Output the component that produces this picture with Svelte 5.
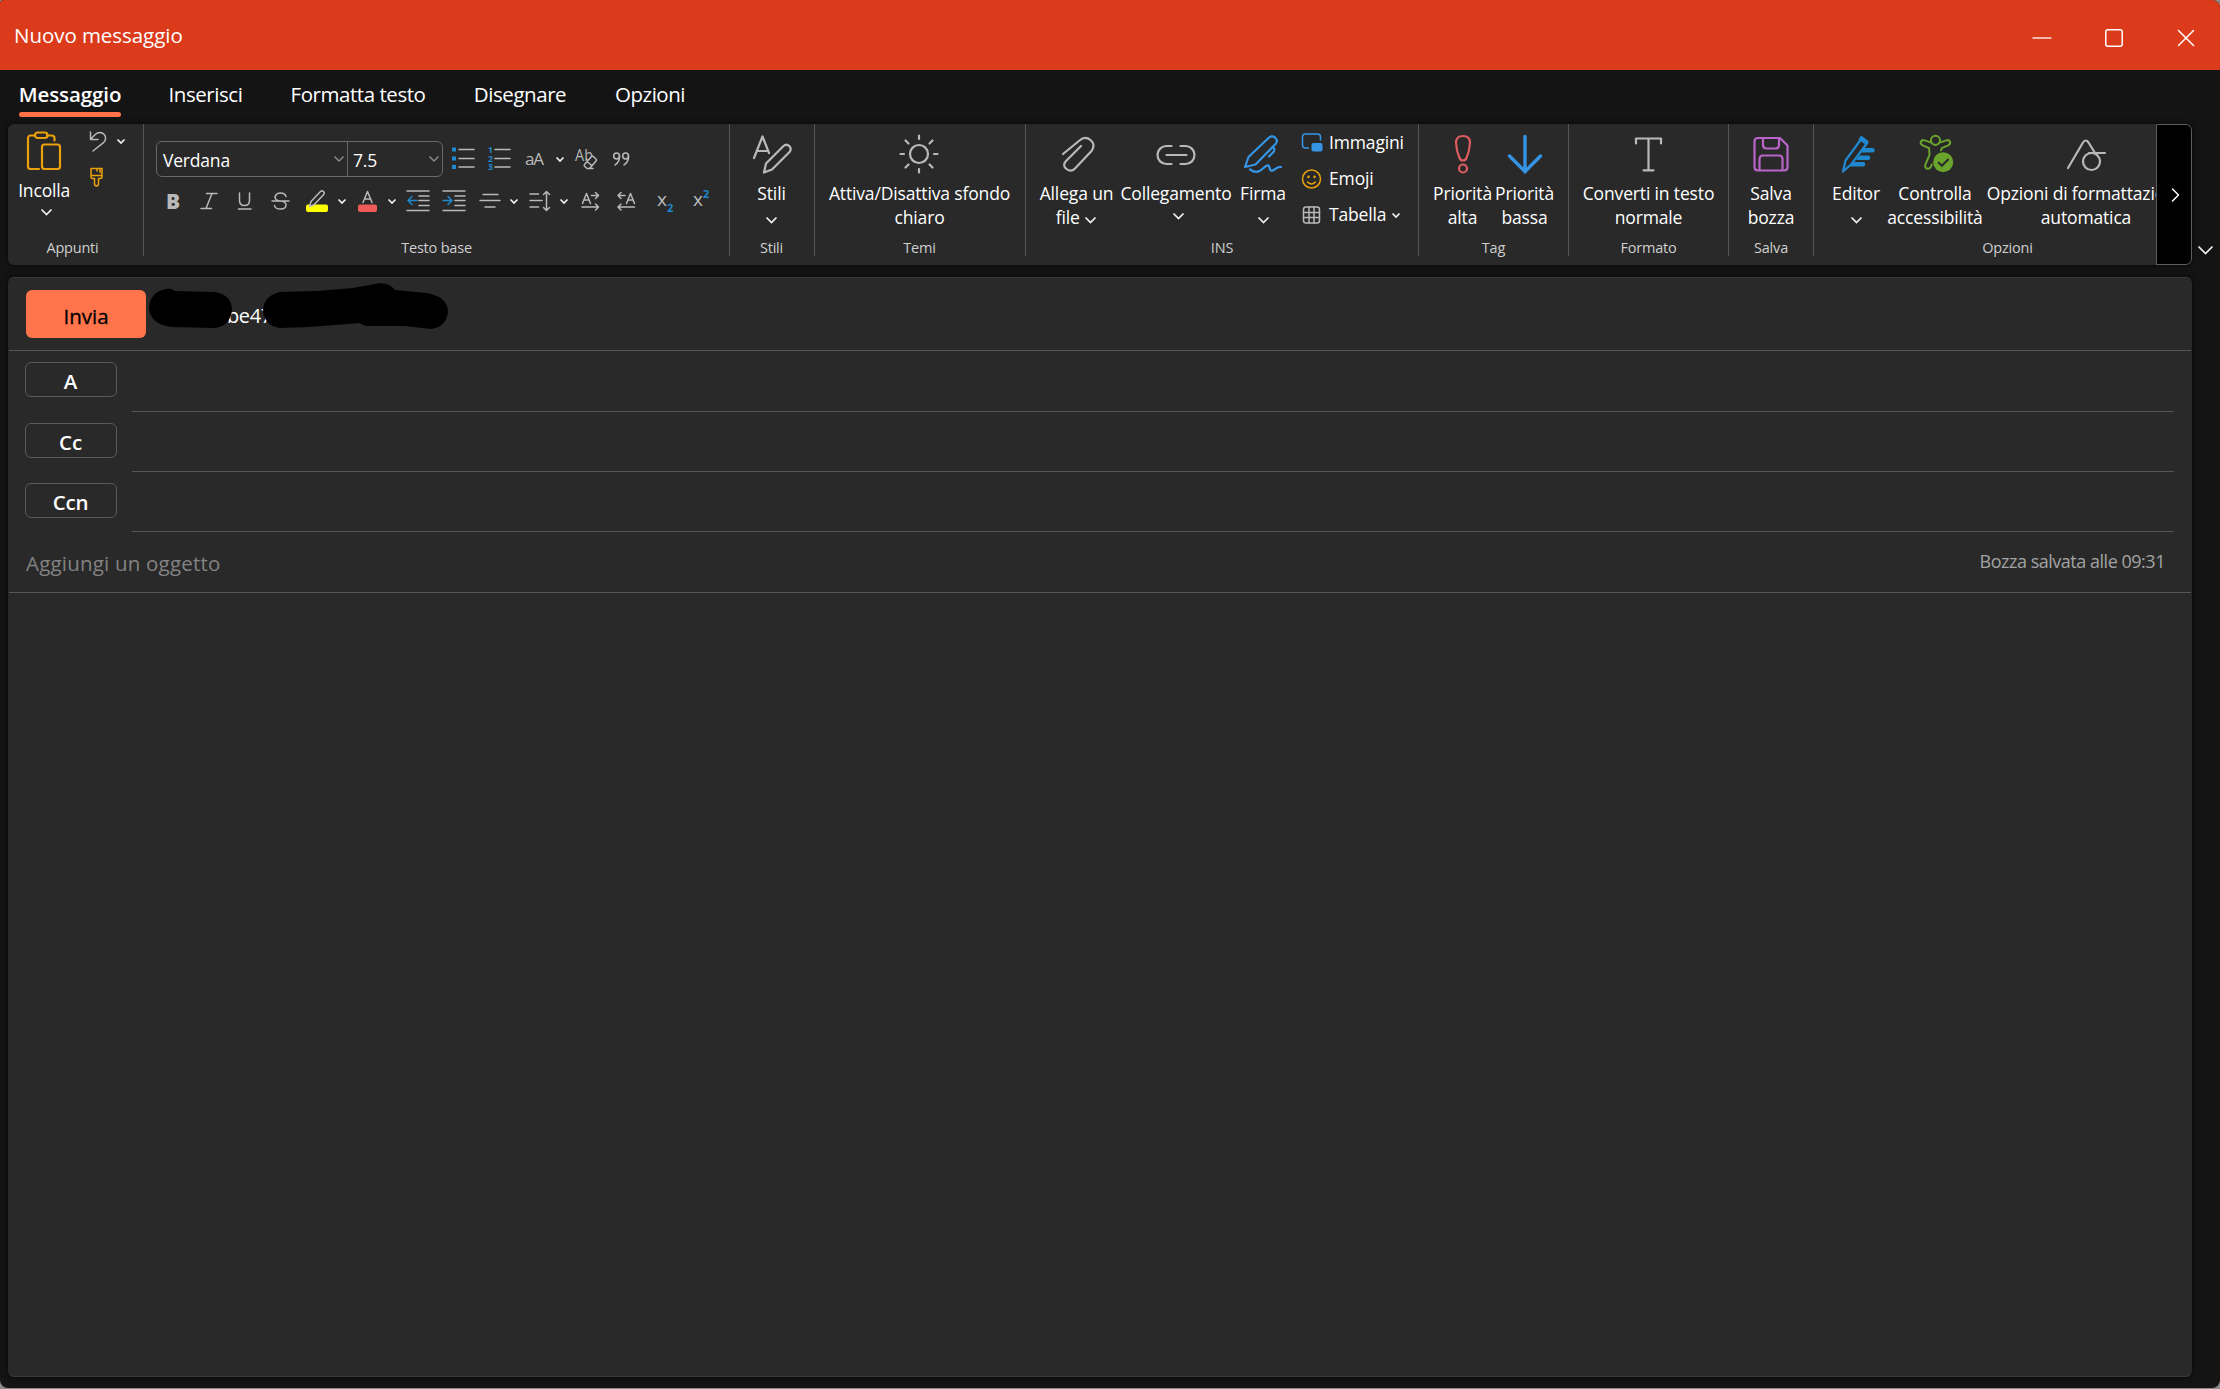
<script>
    let activeTab = 'Messaggio';
    let subject = '';

    const tabs = [
        { name: 'Messaggio', width: 102 },
        { name: 'Inserisci', width: 74 },
        { name: 'Formatta testo', width: 136 },
        { name: 'Disegnare', width: 93 },
        { name: 'Opzioni', width: 72 },
    ];

    const recipients = ['A', 'Cc', 'Ccn'];
</script>

{#snippet chevron(w = 9)}
    <svg class="chevron" width={w + 2} height={w / 2 + 3} viewBox="0 0 {w + 2} {w / 2 + 3}">
        <path d="M1.5 1.5 L{w / 2 + 1} {w / 2 + 1} L{w + 0.5} 1.5" />
    </svg>
{/snippet}

<div class="window">
    <header class="titlebar">
        <span class="title">Nuovo messaggio</span>
        <div class="controls">
            <svg width="18" height="18" viewBox="0 0 18 18"><path d="M0 9H18" opacity=".85" /></svg>
            <svg width="18" height="18" viewBox="0 0 18 18"><rect x=".8" y=".8" width="16.4" height="16.4" rx="2" /></svg>
            <svg width="18" height="18" viewBox="0 0 18 18"><path d="M1.5 1.5L16.5 16.5M16.5 1.5L1.5 16.5" /></svg>
        </div>
    </header>

    <nav class="tabs">
        {#each tabs as tab}
            <button
                class="tab"
                class:active={tab.name === activeTab}
                style="width: {tab.width}px"
                on:click={() => (activeTab = tab.name)}>{tab.name}</button
            >
        {/each}
    </nav>

    <div class="ribbon-row">
        <div class="ribbon">
            <!-- Appunti -->
            <section class="group g-clipboard">
                <div class="tools">
                    <div class="paste">
                        <svg class="orange thick" width="36" height="40" viewBox="0 0 36 40">
                            <path d="M13 38H4.5a2.5 2.5 0 0 1-2.5-2.5V7a2.5 2.5 0 0 1 2.5-2.5H8.5M21 4.5H26a2.5 2.5 0 0 1 2.5 2.5V9.5" />
                            <rect x="9" y="1.5" width="12.5" height="5.5" rx="2.7" />
                            <rect x="16" y="13.5" width="18" height="24.5" rx="2.5" />
                        </svg>
                        <span class="label">Incolla</span>
                        {@render chevron(11)}
                    </div>
                    <div class="clip-side">
                        <div class="undo">
                            <svg width="18" height="21" viewBox="0 0 18 21">
                                <path d="M1.5 1V8.5H9M1.8 8L6.5 3.2C9 .8 13 .8 15 3.2C17.3 5.8 17 9.3 14.8 11.3L4 20" />
                            </svg>
                            {@render chevron(8)}
                        </div>
                        <svg class="orange" width="15" height="21" viewBox="0 0 15 21">
                            <path d="M2 1.5H13V10Q13 11.5 11.5 11.5H9.5V16.5Q9.5 19 7.5 19T5.5 16.5V11.5H3.5Q2 11.5 2 10ZM2 8.5H13M8 1.5V4M11 1.5V5.5" />
                        </svg>
                    </div>
                </div>
                <span class="group-name">Appunti</span>
            </section>

            <!-- Testo base -->
            <section class="group g-text">
                <div class="tools text-tools">
                    <div class="text-row">
                        <div class="fontbox">
                            <div class="font-name">Verdana {@render chevron(10)}</div>
                            <div class="font-size">7.5 {@render chevron(10)}</div>
                        </div>
                        <div class="row-one">
                            <svg width="24" height="26" viewBox="0 0 24 26">
                                <path d="M7 3.5H22M7 12.5H22M7 21H22" />
                                <path class="blue-fill" d="M0 1.500h4v4h-4zM0 10.5h4v4h-4zM0 19h4v4h-4z" />
                            </svg>
                            <svg width="24" height="26" viewBox="0 0 24 26">
                                <path d="M7 3.5H22M7 12.5H22M7 21H22" />
                                <text class="num" x="0" y="7">1</text>
                                <text class="num" x="0" y="15.5">2</text>
                                <text class="num" x="0" y="24">3</text>
                            </svg>
                            <svg width="24" height="26" viewBox="0 0 24 26">
                                <text x="0" y="19" font-size="17" textLength="19">aA</text>
                            </svg>
                            {@render chevron(8)}
                            <svg width="24" height="26" viewBox="0 0 24 26">
                                <text x="0" y="14.5" font-size="15.5" textLength="18" lengthAdjust="spacingAndGlyphs">Ab</text>
                                <path class="cover" d="M9.5 18.5L16.5 10.5Q17.3 9.700 18.3 10.5L21 13Q22 14 21 15L14.5 22.5H12L9.5 20.2Q8.8 19.4 9.5 18.5ZM12 15.5L17 19.8M12 22.5H18" />
                            </svg>
                            <svg width="20" height="26" viewBox="0 0 20 26">
                                <circle cx="3.6" cy="10" r="2.9" />
                                <circle cx="12.6" cy="10" r="2.9" />
                                <path d="M6.5 10Q7 15.5 2 19M15.5 10Q16 15.5 11 19" />
                            </svg>
                        </div>
                    </div>
                    <div class="row-two">
                        <svg width="18" height="26" viewBox="0 0 18 26"><text x="0" y="21" font-size="21" font-weight="800">B</text></svg>
                        <svg width="18" height="26" viewBox="0 0 18 26"><path d="M5.5 5.5H16M0 20.5H10.5M11 5.5L5 20.5" /></svg>
                        <svg width="18" height="26" viewBox="0 0 18 26"><path d="M2.5 5V12.5Q2.5 17.5 7.5 17.5T12.5 12.5V5M1.5 21H14" /></svg>
                        <svg width="20" height="26" viewBox="0 0 20 26"><path d="M15 8.5Q14 5 9.5 5T4 9Q4 12.5 9.5 13T15 17Q15 21 9.5 21T3.5 17.5M1 13H18" /></svg>
                        <svg width="23" height="26" viewBox="0 0 23 26">
                            <path class="yellow-fill" d="M2 16.5H20a2 2 0 0 1 2 2V22a2 2 0 0 1-2 2H2a2 2 0 0 1-2-2V18.5a2 2 0 0 1 2-2z" />
                            <path class="cover" d="M3.5 18.5L5 13.5L14.5 3.5Q16 2.2 17.5 3.5T17.5 6.8L8 16.8Z" />
                        </svg>
                        {@render chevron(8)}
                        <svg width="22" height="26" viewBox="0 0 22 26">
                            <path d="M6 14.5L10.5 3.5L15 14.5M7.5 11H13.5" />
                            <rect class="red-fill" x="1" y="16.5" width="19" height="7.5" rx="2" />
                        </svg>
                        {@render chevron(8)}
                        <svg width="23" height="26" viewBox="0 0 23 26">
                            <path d="M0 3H22M12 8H22M12 12.5H22M12 17.5H22M0 22.5H22" />
                            <path class="blue" d="M10 12.5H1M5 8.5L1 12.5L5 16.5" />
                        </svg>
                        <svg width="23" height="26" viewBox="0 0 23 26">
                            <path d="M0 3H22M12 8H22M12 12.5H22M12 17.5H22M0 22.5H22" />
                            <path class="blue" d="M0 12.5H9M5 8.5L9 12.5L5 16.5" />
                        </svg>
                        <svg width="22" height="26" viewBox="0 0 22 26"><path d="M3 6.5H18M0 12.5H20M5 19H15" /></svg>
                        {@render chevron(8)}
                        <svg width="22" height="26" viewBox="0 0 22 26"><path d="M0 6H8.5M0 12.5H12M0 19H8.5M16.5 3.5V22.5M13.5 6.5L16.5 3.5L19.5 6.5M13.5 19.5L16.5 22.5L19.5 19.5" /></svg>
                        {@render chevron(8)}
                        <svg width="19" height="26" viewBox="0 0 19 26"><path d="M.5 15.5L4.5 5.5L8.5 15.5M2 12H7M9.5 7.5H16.5M13.5 4.5L16.5 7.5L13.5 10.5M0 19H16.5M13.5 16L16.5 19L13.5 22" /></svg>
                        <svg width="19" height="26" viewBox="0 0 19 26"><path d="M9.5 15.5L13.5 5.5L17.5 15.5M11 12H16M8 7.5H1M4 4.5L1 7.5L4 10.5M17.5 19H1M4 16L1 19L4 22" /></svg>
                        <svg width="19" height="26" viewBox="0 0 19 26"><text x="0" y="18" font-size="19">x</text><text class="num script" x="10" y="24">2</text></svg>
                        <svg width="19" height="26" viewBox="0 0 19 26"><text x="0" y="18" font-size="19">x</text><text class="num script" x="10" y="10">2</text></svg>
                    </div>
                </div>
                <span class="group-name">Testo base</span>
            </section>

            <!-- Stili -->
            <section class="group g-styles">
                <div class="tools">
                    <div class="big">
                        <svg class="thick" width="40" height="40" viewBox="0 0 40 40">
                            <path d="M2 24L10.5 2.5L17 19M5 17H15.5" />
                            <path d="M12 38.5L14 29.5L31.5 12Q34.5 9.5 37.3 12Q40 15 37.5 18L20 35.5Z" />
                        </svg>
                        <span class="label">Stili</span>
                        {@render chevron(11)}
                    </div>
                </div>
                <span class="group-name">Stili</span>
            </section>

            <!-- Temi -->
            <section class="group g-theme">
                <div class="tools">
                    <div class="big">
                        <svg class="thick" width="40" height="40" viewBox="0 0 40 40">
                            <circle cx="20" cy="20" r="9" />
                            <path d="M20 1.5V5M20 35V38.5M1.5 20H5M35 20H38.5M6.5 6.5L9.5 9.5M30.5 30.5L33.5 33.5M33.5 6.5L30.5 9.5M9.5 30.5L6.5 33.5" />
                        </svg>
                        <span class="label">Attiva/Disattiva sfondo<br />chiaro</span>
                    </div>
                </div>
                <span class="group-name">Temi</span>
            </section>

            <!-- INS -->
            <section class="group g-insert">
                <div class="tools">
                    <div class="big attach">
                        <svg class="thick" width="40" height="40" viewBox="0 0 40 40">
                            <path d="M5 20L21.5 6.5Q27 1.500 32.5 6T33.5 17L17 34.5Q13 38.5 8.5 35T8 27L23 12" />
                        </svg>
                        <span class="label">Allega un<br />file {@render chevron(11)}</span>
                    </div>
                    <div class="big link">
                        <svg class="thick" width="40" height="40" viewBox="0 0 40 40">
                            <path d="M15.5 12H10.5A9 9 0 0 0 10.5 30H15.5M24.5 12H29.5A9 9 0 0 1 29.5 30H24.5M10.5 21H30.5" />
                        </svg>
                        <span class="label">Collegamento</span>
                        {@render chevron(11)}
                    </div>
                    <div class="big sign">
                        <svg class="sky thick" width="40" height="40" viewBox="0 0 40 40">
                            <path d="M2 33L5.5 23L25.5 4Q28.5 1 32 3.5Q35.5 7 32.5 10L12.5 30.5ZM30 13Q33 16 29.5 19L26 22.5M7 35.5Q14 40.5 20 34.5T26.5 34Q27.5 38.5 31.5 35.5T38 33" />
                        </svg>
                        <span class="label">Firma</span>
                        {@render chevron(11)}
                    </div>
                    <div class="side">
                        <div class="side-item">
                            <svg class="sky" width="23" height="22" viewBox="0 0 23 22">
                                <path d="M7.5 16H4.5Q1.5 16 1.5 13V5Q1.5 2 4.5 2H16.5Q19.5 2 19.5 5V8" />
                                <rect class="sky-fill" x="10.5" y="11" width="11" height="8.5" rx="2" />
                            </svg>
                            <span class="label">Immagini</span>
                        </div>
                        <div class="side-item">
                            <svg class="orange" width="23" height="22" viewBox="0 0 23 22">
                                <circle cx="10.5" cy="11" r="9" />
                                <path d="M6.5 14Q10.5 18 14.5 14" />
                                <path stroke-width="2.5" d="M7.5 8.7v.2M13.5 8.7v.2" />
                            </svg>
                            <span class="label">Emoji</span>
                        </div>
                        <div class="side-item">
                            <svg width="23" height="22" viewBox="0 0 23 22">
                                <rect x="2.5" y="3" width="16" height="16" rx="2.5" />
                                <path d="M8 3V19M13 3V19M2.5 8.5H18.5M2.5 13.5H18.5" />
                            </svg>
                            <span class="label">Tabella</span>
                            {@render chevron(8)}
                        </div>
                    </div>
                </div>
                <span class="group-name">INS</span>
            </section>

            <!-- Tag -->
            <section class="group g-tag">
                <div class="tools">
                    <div class="big tag">
                        <svg class="red thick" width="40" height="40" viewBox="0 0 40 40">
                            <path d="M13 9Q13 2 20 2T27 9Q26.5 17 23.5 24Q22.5 26.5 20 26.5T16.5 24Q13.5 17 13 9Z" />
                            <circle cx="20" cy="34.5" r="4" />
                        </svg>
                        <span class="label">Priorità<br />alta</span>
                    </div>
                    <div class="big tag">
                        <svg class="sky heavy" width="40" height="40" viewBox="0 0 40 40">
                            <path d="M20 2.5V38M4.5 22L20 37.5L35.5 22" />
                        </svg>
                        <span class="label">Priorità<br />bassa</span>
                    </div>
                </div>
                <span class="group-name">Tag</span>
            </section>

            <!-- Formato -->
            <section class="group g-format">
                <div class="tools">
                    <div class="big">
                        <svg class="thick" width="40" height="40" viewBox="0 0 40 40">
                            <path d="M7 9.5V4.5H32V9.5M19.5 4.5V36M14.5 36.3H24.5" />
                        </svg>
                        <span class="label">Converti in testo<br />normale</span>
                    </div>
                </div>
                <span class="group-name">Formato</span>
            </section>

            <!-- Salva -->
            <section class="group g-save">
                <div class="tools">
                    <div class="big">
                        <svg class="purple thick" width="40" height="40" viewBox="0 0 40 40">
                            <path d="M7 4H29L36.5 11.5V33Q36.5 36.5 33 36.5H7Q3.5 36.5 3.5 33V7.5Q3.5 4 7 4Z" />
                            <path d="M12 4V11Q12 14.5 15.5 14.5H24.500Q28 14.5 28 11V4M8.5 36V25Q8.5 21.5 12 21.5H28Q31.5 21.5 31.5 25V36" />
                        </svg>
                        <span class="label">Salva<br />bozza</span>
                    </div>
                </div>
                <span class="group-name">Salva</span>
            </section>

            <!-- Opzioni -->
            <section class="group g-options">
                <div class="tools">
                    <div class="big editor">
                        <svg class="azure thick" width="40" height="40" viewBox="0 0 40 40">
                            <path d="M7 37.5L9.5 26.5L26 4L31.5 8.5L15.5 30Z" />
                            <path class="blue-fill" d="M25 1.5L32.5 7L30 11L22.5 5.5ZM28 14H36.5a2 2 0 0 1 0 4.5H25ZM23.5 21.5H32a2 2 0 0 1 0 4.5H20ZM18.5 28H27a2.2 2.2 0 0 1 0 4.5H13Z" />
                        </svg>
                        <span class="label">Editor</span>
                        {@render chevron(11)}
                    </div>
                    <div class="big access">
                        <svg class="green thick" width="40" height="44" viewBox="0 0 40 44">
                            <circle cx="20.5" cy="7" r="5" />
                            <path d="M16 9.5L8.5 7Q5.5 6 4.5 8.5T6.5 12.5L13.5 15.5L14 23L9.5 33.5Q8.5 37 11 38T15.5 36L16.5 33.5M25 9.5L32.5 7Q35.5 6 36.5 8.5T34.5 12.5L27.5 15.5L26.5 18" />
                            <circle class="green-fill" cx="29" cy="31" r="11" />
                            <path class="tick" d="M24 31.5L27.5 35L34.5 28" />
                        </svg>
                        <span class="label">Controlla<br />accessibilità</span>
                    </div>
                    <div class="big autoformat">
                        <svg class="thick" width="40" height="40" viewBox="0 0 40 40">
                            <path d="M2 34L17 8.5Q19.5 4.5 22.5 8.5L29 19M23 19H39" />
                            <circle cx="25.5" cy="27.5" r="8.5" />
                        </svg>
                        <span class="label">Opzioni di formattazione<br />automatica</span>
                    </div>
                </div>
                <span class="group-name">Opzioni</span>
            </section>

            <button class="scroll-right" aria-label="Altri comandi">
                <svg width="10" height="16" viewBox="0 0 10 16"><path d="M1.5 2L7.5 8L1.5 14" /></svg>
            </button>
        </div>
        <div class="collapse">{@render chevron(15)}</div>
    </div>

    <main class="compose">
        <div class="send-row">
            <button class="send">Invia</button>
            <div class="sender">
                <span>be47.</span>
                <svg class="redaction" width="300" height="50" viewBox="0 0 300 50">
                    <path d="M17 6Q22 5 26 8L66 9Q83 12 83 27Q81 43 66 45L22 44Q1 41 0 25Q1 9 17 6Z" />
                    <path d="M131 9L168 8L204 5L226 1Q239 -2 246 7L278 10Q299 14 299 29Q297 44 282 46L256 43L218 43Q214 43 211 40L160 44L131 45Q116 43 114 28Q114 13 131 9Z" />
                </svg>
            </div>
        </div>

        <div class="recipients">
            {#each recipients as name}
                <div class="recipient">
                    <button class="recipient-button">{name}</button>
                    <div class="recipient-line"></div>
                </div>
            {/each}
        </div>

        <div class="subject-row">
            <input class="subject" placeholder="Aggiungi un oggetto" bind:value={subject} />
            <span class="saved">Bozza salvata alle 09:31</span>
        </div>
        <div class="body"></div>
    </main>
</div>

<style>
    :global(body) {
        background: #8b8b8b;
        overflow: hidden;
    }

    .window {
        width: 2220px;
        height: 1388px;
        background: #141414;
        border-radius: 4px 8px 8px 8px;
        overflow: hidden;
        color: #fff;
        font-family: 'Segoe UI', 'Open Sans', 'Noto Sans', sans-serif;
        font-size: 17.5px;
        display: flex;
        flex-direction: column;
    }

    button,
    input {
        font-family: inherit;
        color: inherit;
        background: none;
        border: 0;
        padding: 0;
        margin: 0;
    }

    svg {
        display: block;
        flex: none;
        fill: none;
        stroke: #b9b9b9;
        stroke-width: 1.5;
        stroke-linecap: round;
        stroke-linejoin: round;
        overflow: visible;
    }

    .thick {
        stroke-width: 2.2;
    }

    .heavy {
        stroke-width: 3.4;
    }

    svg text {
        fill: #b9b9b9;
        stroke: none;
    }

    svg .num {
        fill: #2088cf;
        font-size: 8.5px;
        font-weight: 700;
    }

    svg .script {
        font-size: 11px;
    }

    .chevron {
        stroke: #f2f2f2;
        stroke-width: 1.7;
        stroke-linecap: butt;
        stroke-linejoin: miter;
    }

    .orange {
        stroke: #eaa10c;
    }

    .sky {
        stroke: #3595e4;
    }

    .red {
        stroke: #dd5c60;
    }

    .purple {
        stroke: #ba64ca;
    }

    .green {
        stroke: #6ba42c;
    }

    .blue,
    .azure {
        stroke: #2088cf;
    }

    .blue-fill {
        fill: #2088cf;
        stroke: none;
    }

    .sky-fill {
        fill: #3595e4;
        stroke: none;
    }

    .yellow-fill {
        fill: #ff0;
        stroke: none;
    }

    .red-fill {
        fill: #ee5b58;
        stroke: none;
    }

    .green-fill {
        fill: #6ba42c;
        stroke: none;
    }

    .tick {
        stroke: #292929;
    }

    .cover {
        fill: #292929;
    }

    /* title bar */
    .titlebar {
        height: 70px;
        flex: none;
        box-sizing: border-box;
        padding: 0 25px 0 14px;
        background: #db3b1b;
        display: flex;
        align-items: center;
        justify-content: space-between;
    }

    .title {
        font-size: 20.5px;
        letter-spacing: -0.05px;
    }

    .controls {
        display: flex;
        gap: 54px;
        padding-top: 6px;
    }

    .controls svg {
        stroke: #fff;
    }

    /* tabs */
    .tabs {
        height: 54px;
        flex: none;
        display: flex;
        gap: 47.5px;
        padding-left: 19px;
    }

    .tab {
        height: 47px;
        box-sizing: border-box;
        font-size: 20.5px;
        letter-spacing: -0.45px;
        white-space: nowrap;
        border-bottom: 5px solid transparent;
        padding-top: 6px;
        display: flex;
        align-items: center;
        justify-content: center;
        position: relative;
    }

    .tab.active {
        font-weight: 600;
        letter-spacing: -0.1px;
    }

    .tab.active::after {
        content: '';
        position: absolute;
        left: 0;
        right: 0;
        bottom: -5px;
        height: 5px;
        border-radius: 3px;
        background: #ff7249;
    }

    /* ribbon */
    .ribbon-row {
        height: 141px;
        flex: none;
        display: flex;
        padding-left: 8px;
    }

    .ribbon {
        width: 2184px;
        height: 141px;
        display: flex;
        position: relative;
        overflow: hidden;
        background: #292929;
        border-radius: 6px;
        box-shadow: 0 0 6px rgba(0, 0, 0, 0.7);
    }

    .group {
        height: 132px;
        flex: none;
        box-sizing: border-box;
        border-right: 1px solid #545454;
        display: flex;
        flex-direction: column;
        align-items: center;
    }

    .g-clipboard {
        width: 136px;
    }

    .g-text {
        width: 586px;
    }

    .g-styles,
    .g-save {
        width: 85px;
    }

    .g-theme {
        width: 211px;
    }

    .g-styles,
    .g-theme {
        padding-right: 1px;
    }

    .g-insert {
        width: 393px;
    }

    .g-tag {
        width: 150px;
    }

    .g-format {
        width: 160px;
    }

    .g-options {
        width: 387px;
        border-right: 0;
    }

    .tools {
        width: 100%;
        height: 114px;
        flex: none;
        display: flex;
        justify-content: center;
    }

    .group-name {
        font-size: 14.5px;
        line-height: 20px;
        letter-spacing: -0.2px;
        color: #cfcfcf;
    }

    .g-clipboard .group-name {
        padding-right: 6px;
    }

    .label {
        line-height: 24px;
        letter-spacing: -0.15px;
        text-align: center;
        white-space: nowrap;
    }

    .label :global(.chevron) {
        display: inline-block;
    }

    .big {
        display: flex;
        flex-direction: column;
        align-items: center;
        padding-top: 10px;
    }

    .big > svg:first-child {
        margin-bottom: 7px;
        height: 40px;
    }

    .big > :global(.chevron) {
        margin-top: 11px;
    }

    .paste {
        width: 72px;
        display: flex;
        flex-direction: column;
        align-items: center;
        padding: 7px 0 0 1px;
    }

    .paste svg:first-child {
        margin-bottom: 7px;
    }

    .paste > :global(.chevron) {
        margin: 6px 0 0 5px;
    }

    .clip-side {
        width: 55px;
        padding: 7px 0 0 10px;
        display: flex;
        flex-direction: column;
        gap: 15px;
    }

    .undo {
        display: flex;
        align-items: center;
        gap: 9px;
    }

    .text-tools {
        flex-direction: column;
        justify-content: flex-start;
        box-sizing: border-box;
        padding: 17px 0 0 12px;
    }

    .text-row {
        display: flex;
        align-items: center;
        gap: 8.5px;
    }

    .fontbox {
        width: 287px;
        height: 36px;
        box-sizing: border-box;
        border: 1px solid #696969;
        border-radius: 6px;
        display: flex;
    }

    .font-name,
    .font-size {
        flex: none;
        box-sizing: border-box;
        display: flex;
        align-items: center;
        justify-content: space-between;
        padding: 2px 2px 0 6px;
        letter-spacing: -0.2px;
    }

    .font-name {
        width: 191px;
        border-right: 1px solid #696969;
    }

    .font-size {
        width: 94px;
        padding-left: 5px;
    }

    .fontbox :global(.chevron) {
        stroke: #8f8f8f;
        stroke-width: 1.4;
        margin-top: -3px;
    }

    .row-one {
        display: grid;
        grid-template-columns: 36px 37px 30px 20px 38px 20px;
        align-items: center;
    }

    .row-two {
        display: grid;
        grid-template-columns: 35px 36px 34px 35px 31px 20px 30px 20px 36px 37px 29px 21px 29px 23px 35px 40px 36px 18px;
        align-items: center;
        padding: 11px 0 0 9.5px;
    }

    .attach {
        width: 79px;
        padding-left: 12px;
    }

    .attach .label {
        margin-left: -2px;
    }

    .link {
        width: 118px;
    }

    .link > :global(.chevron) {
        margin: 7px 0 0 4px;
    }

    .sign {
        width: 56px;
    }

    .g-insert .tools {
        justify-content: flex-start;
    }

    .side {
        padding: 7px 0 0 10px;
        display: flex;
        flex-direction: column;
        gap: 12px;
    }

    .side-item {
        display: flex;
        align-items: center;
        gap: 5px;
        height: 24px;
    }

    .side-item .label {
        margin-top: -2px;
    }

    .tag {
        width: 62px;
    }

    .g-options .tools {
        justify-content: flex-start;
    }

    .editor {
        width: 62px;
        padding-left: 11px;
    }

    .access {
        width: 96px;
    }

    .autoformat {
        width: 206px;
    }

    .scroll-right {
        position: absolute;
        top: 0;
        right: 0;
        width: 36px;
        height: 141px;
        box-sizing: border-box;
        background: #000;
        border: 1px solid #5e5e5e;
        border-radius: 0 6px 6px 0;
        padding-left: 4px;
        display: flex;
        align-items: center;
        justify-content: center;
    }

    .scroll-right svg {
        stroke: #fff;
    }

    .collapse {
        display: flex;
        align-items: flex-end;
        padding: 0 0 10px 5px;
    }

    /* compose area */
    .compose {
        width: 2184px;
        height: 1100px;
        box-sizing: border-box;
        margin: 12px 0 0 8px;
        background: #292929;
        border: 1px solid #3a3a3a;
        border-left-color: #292929;
        border-right-color: #292929;
        border-radius: 6px;
        box-shadow: 0 0 6px rgba(0, 0, 0, 0.7);
        display: flex;
        flex-direction: column;
    }

    .send-row {
        height: 73px;
        box-sizing: border-box;
        border-bottom: 1px solid #565656;
        padding: 12px 0 0 17px;
        display: flex;
        gap: 3px;
    }

    .send {
        width: 120px;
        height: 48px;
        border-radius: 6px;
        background: #ff744b;
        color: #000;
        font-size: 20.5px;
        padding-top: 3px;
        -webkit-text-stroke: 0.3px #000;
    }

    .sender {
        position: relative;
        width: 300px;
        height: 50px;
        font-size: 20px;
        line-height: 27px;
        letter-spacing: -0.4px;
        box-sizing: border-box;
        padding: 12px 0 0 78px;
    }

    .redaction {
        position: absolute;
        left: 0;
        top: -7px;
    }

    .redaction path {
        fill: #000;
        stroke: none;
    }

    .recipients {
        padding: 0 17px 0 16px;
    }

    .recipient {
        height: 60px;
        display: flex;
        gap: 15px;
    }

    .recipient:first-child {
        height: 61px;
    }

    .recipient-button {
        width: 92px;
        height: 35px;
        box-sizing: border-box;
        margin-top: 11px;
        border: 1px solid #5a5a5a;
        border-radius: 6px;
        font-size: 20.5px;
        font-weight: 600;
        line-height: 24px;
        padding: 3px 1px 0 0;
        letter-spacing: -0.2px;
    }

    .recipient-line {
        flex: 1;
        border-bottom: 1px solid #565656;
    }

    .subject-row {
        height: 61px;
        box-sizing: border-box;
        border-bottom: 1px solid #565656;
        padding: 2px 26px 0 17px;
        display: flex;
        align-items: center;
        justify-content: space-between;
    }

    .subject {
        width: 800px;
        font-size: 20.5px;
        letter-spacing: 0.2px;
        outline: none;
    }

    .subject::placeholder {
        color: #838383;
        opacity: 1;
    }

    .saved {
        color: #a3a3a3;
        font-size: 18px;
        letter-spacing: -0.48px;
        padding-bottom: 4px;
    }

    .body {
        flex: 1;
    }
</style>
